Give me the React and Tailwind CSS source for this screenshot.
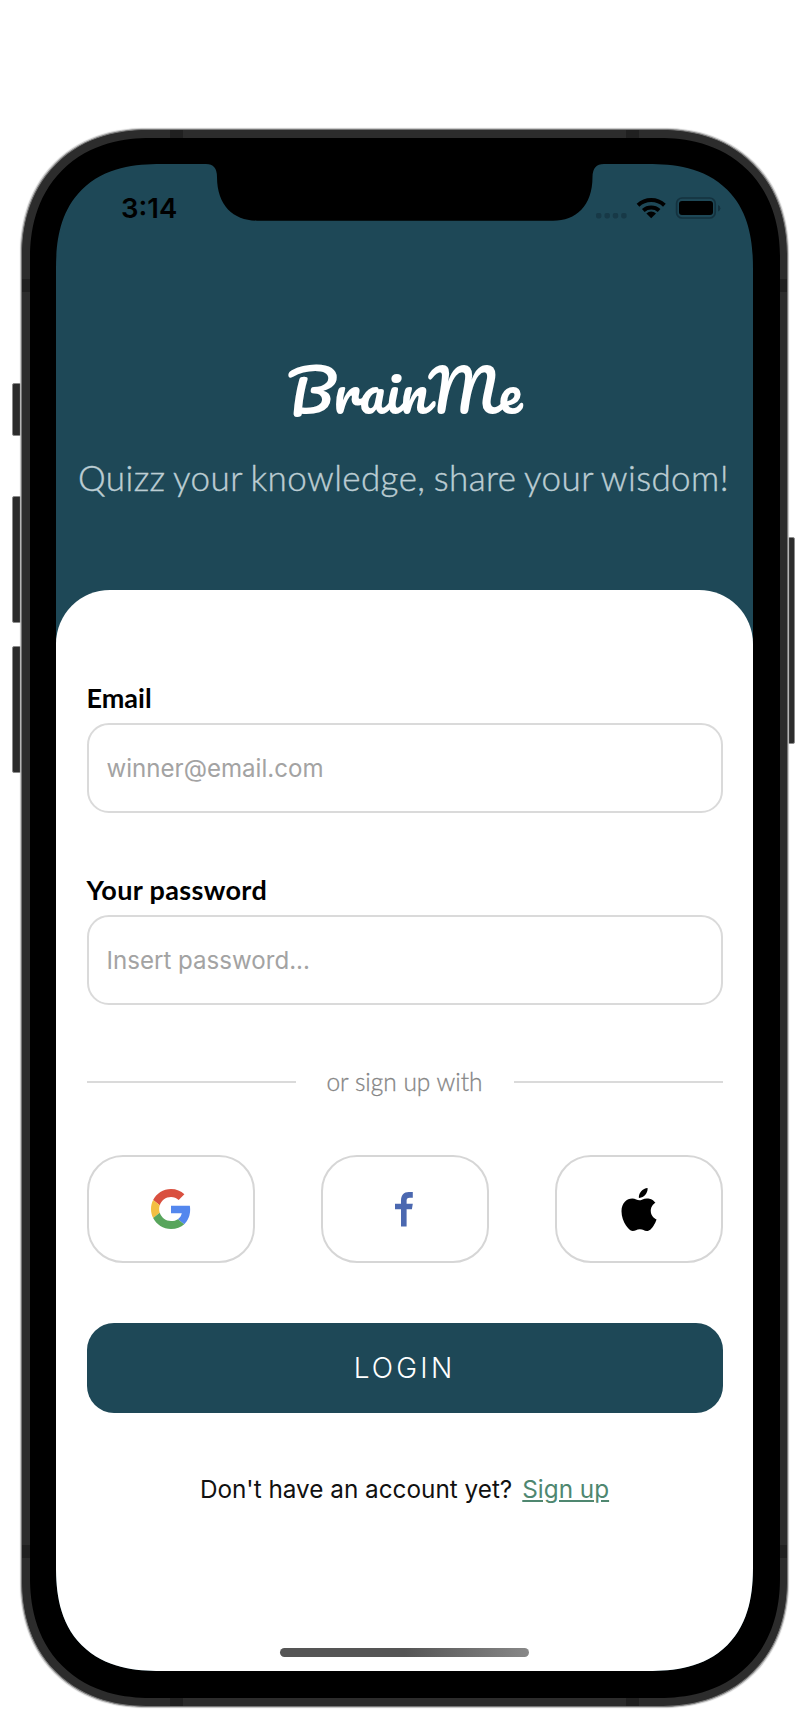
import React from "react";

function Label({ children, className }) {
  return (
    <label className={`block h-[36px] whitespace-nowrap font-['Lato'] text-[27px] leading-[36px] font-bold text-black ${className}`}>
      {children}
    </label>
  );
}

function Field({ placeholder, className }) {
  return (
    <input
      placeholder={placeholder}
      className={`block h-[90px] w-full rounded-[22px] border-2 border-[#dadada] bg-white pl-[18px] font-['Inter'] text-[24.1px] text-black outline-none placeholder:text-[#a3a3a3] ${className}`}
    />
  );
}

function SocialButton({ label, children }) {
  return (
    <button aria-label={label} className="flex h-[108px] w-[168px] items-center justify-center rounded-[36px] border-2 border-[#d6d6d6] bg-white">
      {children}
    </button>
  );
}

function StatusIcons() {
  return (
    <svg width="126" height="24" viewBox="595 196 126 24">
      <g fill="#173947">
        <rect x="596" y="213" width="5.4" height="5.4" rx="1.8" />
        <rect x="604.5" y="213" width="5.4" height="5.4" rx="1.8" />
        <rect x="612.8" y="213" width="5.4" height="5.4" rx="1.8" />
        <rect x="621.2" y="213" width="5.4" height="5.4" rx="1.8" />
      </g>
      <g fill="none" stroke="#000" strokeWidth="4">
        <path d="M638 205.2 A19.5 19.5 0 0 1 664.4 205.2" />
        <path d="M643.3 210.4 A12 12 0 0 1 659.1 210.4" />
      </g>
      <path d="M651.2 218.2 L646.4 213.4 A7 7 0 0 1 656 213.4 Z" />
      <rect x="676.6" y="198" width="38.6" height="20" rx="5.5" fill="none" stroke="#14323f" strokeWidth="1.7" />
      <rect x="679" y="201" width="34" height="14" rx="3" />
      <path d="M718 205 Q720.4 206 720.4 208.2 Q720.4 210.4 718 211.4 Z" fill="#14323f" />
    </svg>
  );
}

function Header() {
  return (
    <header className="h-[426px]">
      <div className="flex h-[60px] items-start justify-between pt-[32px] pr-[32px] pl-[65px]">
        <span className="font-['Inter'] text-[27.5px] leading-[24px] font-semibold text-black">3:14</span>
        <StatusIcons />
      </div>
      <h1 className="mt-[126px] h-[80px] text-center font-['Pacifico',cursive] text-[57px] leading-[80px] font-normal text-white">
        BrainMe
      </h1>
      <p className="mt-[22px] pr-[2px] text-center font-['Lato'] text-[35px] leading-[50px] font-light tracking-[0.4px] [word-spacing:-1.5px] whitespace-nowrap text-[#bccdd3] [-webkit-text-stroke:0.4px_#bccdd3]">
        Quizz your knowledge, share your wisdom!
      </p>
    </header>
  );
}

function Sheet() {
  return (
    <main className="flex h-[1081px] flex-col rounded-t-[54px] bg-white pt-[90px] pr-[30.5px] pl-[30.5px]">
      <Label>Email</Label>
      <Field placeholder="winner@email.com" className="mt-[7px]" />
      <Label className="mt-[59px] tracking-[0.35px]">Your password</Label>
      <Field placeholder="Insert password..." className="mt-[7px]" />
      <div className="mt-[60px] flex h-[34px] items-center justify-between">
        <span className="h-[2px] w-[209px] bg-[#dadada]" />
        <span className="font-['Lato'] text-[24.5px] leading-[32px] font-light whitespace-nowrap text-[#858585] [-webkit-text-stroke:0.3px_#858585]">or sign up with</span>
        <span className="h-[2px] w-[209px] bg-[#dadada]" />
      </div>
      <div className="mt-[56px] flex justify-between">
        <SocialButton label="Google">
          <svg width="40" height="40" viewBox="0 0 48 48">
            <path fill="#d9503f" d="M24 9.5c3.54 0 6.71 1.22 9.21 3.6l6.85-6.85C35.9 2.38 30.47 0 24 0 14.62 0 6.51 5.38 2.56 13.22l7.98 6.19C12.43 13.72 17.74 9.5 24 9.5z" />
            <path fill="#5387ee" d="M46.98 24.55c0-1.57-.15-3.09-.38-4.55H24v9.02h12.94c-.58 2.96-2.26 5.48-4.78 7.18l7.73 6c4.51-4.18 7.09-10.36 7.09-17.65z" />
            <path fill="#f3bf42" d="M10.53 28.59c-.48-1.45-.76-2.99-.76-4.59s.27-3.14.76-4.59l-7.98-6.19C.92 16.46 0 20.12 0 24c0 3.88.92 7.54 2.56 10.78l7.97-6.19z" />
            <path fill="#58a55c" d="M24 48c6.48 0 11.93-2.13 15.89-5.81l-7.73-6c-2.15 1.45-4.92 2.3-8.16 2.3-6.26 0-11.57-4.22-13.47-9.91l-7.98 6.19C6.51 42.62 14.62 48 24 48z" />
          </svg>
        </SocialButton>
        <SocialButton label="Facebook">
          <svg width="18" height="35" viewBox="0 0 18 35" className="-translate-x-px">
            <path fill="#4b68b0" d="M6 34.5V17.2H0V11.7H6V8.6C6 3.2 8.8 0 13.8 0H17.8V5.7H14.8C12.3 5.7 11.6 6.7 11.6 8.8V11.7H17.8L16.9 17.2H11.6V34.5Z" />
          </svg>
        </SocialButton>
        <SocialButton label="Apple">
          <svg width="36" height="43" viewBox="0 0 814 1000">
            <path d="M788.1 340.9c-5.8 4.5-108.2 62.2-108.2 190.5 0 148.4 130.3 200.9 134.2 202.2-.6 3.2-20.7 71.9-68.7 141.9-42.8 61.6-87.5 123.1-155.5 123.1s-85.5-39.5-164-39.5c-76.5 0-103.7 40.8-165.9 40.8s-105.6-57-155.5-127C46.7 790.7 0 663 0 541.8c0-194.4 126.4-297.5 250.8-297.5 66.1 0 121.2 43.4 162.7 43.4 39.5 0 101.1-46 176.3-46 28.5 0 130.9 2.6 198.3 99.2zm-234-181.5c31.1-36.9 53.1-88.1 53.1-139.3 0-7.1-.6-14.3-1.9-20.1-50.6 1.9-110.8 33.7-147.1 75.8-28.5 32.4-55.1 83.6-55.1 135.5 0 7.8 1.3 15.6 1.9 18.1 3.2.6 8.4 1.3 13.6 1.3 45.4 0 102.5-30.4 135.5-71.3z" />
          </svg>
        </SocialButton>
      </div>
      <button className="mt-[60px] h-[90px] w-full rounded-[27px] bg-[#1e4857] font-['Inter'] text-[28px] font-light tracking-[3.2px] text-white">
        LOGIN
      </button>
      <p className="mt-[59px] flex h-[34px] justify-center gap-[10px] font-['Inter'] text-[24.3px] leading-[34px] whitespace-nowrap text-[#111]">
        <span>Don't have an account yet?</span>
        <a className="text-[#4f8770] underline">Sign up</a>
      </p>
      <div className="mt-auto mb-[14px] h-[9px] w-[249px] self-center rounded-full bg-linear-to-r from-[#555] via-[#555] to-[#888]" />
    </main>
  );
}

function Hardware() {
  return (
    <>
      <i className="absolute top-[383px] left-[12px] h-[53px] w-[10px] rounded-l-[2px] border border-[#8b8b8b] bg-[#2c2c2c]" />
      <i className="absolute top-[496px] left-[12px] h-[127px] w-[10px] rounded-l-[2px] border border-[#8b8b8b] bg-[#2c2c2c]" />
      <i className="absolute top-[646px] left-[12px] h-[127px] w-[10px] rounded-l-[2px] border border-[#8b8b8b] bg-[#2c2c2c]" />
      <i className="absolute top-[537px] left-[787px] h-[207px] w-[8px] rounded-r-[2px] border border-[#8b8b8b] bg-[#2c2c2c]" />
    </>
  );
}

function Bands() {
  return (
    <>
      <i className="absolute top-0 left-[148px] h-[8px] w-[13px] bg-[#202020]" />
      <i className="absolute top-0 left-[604px] h-[8px] w-[13px] bg-[#202020]" />
      <i className="absolute bottom-0 left-[148px] h-[8px] w-[13px] bg-[#202020]" />
      <i className="absolute bottom-0 left-[604px] h-[8px] w-[13px] bg-[#202020]" />
      <i className="absolute top-[149px] left-0 h-[13px] w-[8px] bg-[#202020]" />
      <i className="absolute top-[149px] right-0 h-[13px] w-[7px] bg-[#202020]" />
      <i className="absolute top-[1415px] left-0 h-[13px] w-[8px] bg-[#202020]" />
      <i className="absolute top-[1415px] right-0 h-[13px] w-[7px] bg-[#202020]" />
    </>
  );
}

export default function App() {
  return (
    <div className="relative h-[1712px] w-[808px] overflow-hidden bg-white pt-[129px] pl-[21px]">
      <Hardware />
      <div className="relative h-[1578px] w-[767px] rounded-[126px] border border-[#777] bg-[#2c2c2c] pt-[8px] pr-[7px] pb-[8px] pl-[8px] shadow-[0_0_1px_1px_#c4c4c4] [corner-shape:superellipse(1.12)]">
        <Bands />
        <div className="relative h-[1560px] w-[750px] rounded-[120px] bg-black pt-[26px] pl-[26px] [corner-shape:superellipse(1.15)]">
          <div className="h-[1507px] w-[697px] overflow-hidden rounded-[105px] bg-[#1e4857] [corner-shape:superellipse(1.3)]">
            <Header />
            <Sheet />
          </div>
          <svg className="absolute top-[24px] left-[174px]" width="402" height="60" viewBox="204 162 402 60">
            <path d="M204 162V164H206Q217 164 217 177C217 206 234 220.7 257 220.7H553C576 220.7 592.5 206 592.5 177Q592.5 164 604 164V162Z" />
          </svg>
        </div>
      </div>
    </div>
  );
}
